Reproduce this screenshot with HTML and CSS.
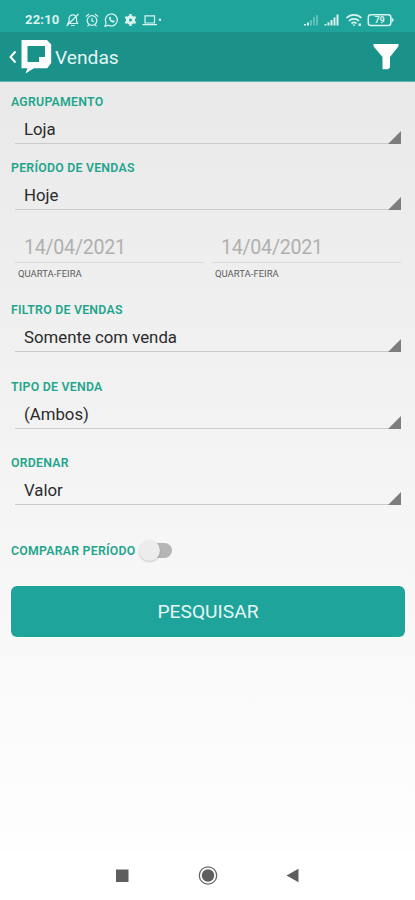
FILE: index.html
```html
<!DOCTYPE html>
<html lang="pt-BR">
<head>
  <meta charset="utf-8">
  <title>Vendas</title>
  <link rel="stylesheet" href="styles.css">
</head>
<body>
  <div class="status-bar">
    <span class="clock">22:10</span>
    <svg class="status-left" width="100" height="16" viewBox="0 0 100 16" fill="none" stroke="currentColor" stroke-width="1.200">
      <!-- muted bell -->
      <path d="M3 11.500h9.500L11.500 9V6.500a3.700 3.700 0 0 0-7.400 0V9zM6 13.500h3.500M1.500 14L13.500 2"/>
      <!-- alarm -->
      <circle cx="27" cy="8.500" r="4.800"/>
      <path d="M27 6v2.800l2 1M21 4.500L24 2M33 4.500L30 2M24 12.700l-1.500 1.700M30 12.700l1.500 1.700"/>
      <!-- whatsapp -->
      <path d="M40 14.300l1-3.700a6 6 0 1 1 2.500 2.600z"/>
      <path d="M44.200 5.200c-.8 2.700 2 5.800 4.900 5.300l.7-1.300-1.800-1.100-.8.700-1.700-1.800.7-.8-.8-1.700z" fill="currentColor" stroke="none"/>
      <!-- settings -->
      <circle cx="65.500" cy="8" r="3.100" stroke-width="3"/>
      <path d="M65.500 2v12M60.300 5l10.400 6M60.300 11l10.400-6" stroke-width="2.400"/>
      <circle cx="65.500" cy="8" r="1.500" fill="#1fa49c" stroke="none"/>
      <!-- laptop -->
      <path d="M80 3.800h9.500v7.200H80zM77.500 12.700h14.500"/>
      <circle cx="95" cy="7.700" r="1.200" fill="currentColor" stroke="none"/>
    </svg>
    <svg class="status-right" width="94" height="16" viewBox="0 0 94 16" fill="currentColor">
      <path d="M1 13.500V12h2v1.500zM4 13.500v-3h2v3z"/>
      <path opacity=".35" d="M7 13.500V8h2v5.500zM10 13.500V5h2v8.500zM13 13.500V3h2v10.500z"/>
      <path d="M21.500 13.500V12h2v1.500zM24.500 13.500v-3.200h2v3.200zM27.500 13.500V8h2v5.500zM30.500 13.500V5.500h2v8zM33.500 13.500V2.500h2v11z"/>
      <g fill="none" stroke="currentColor" stroke-width="1.700">
        <path d="M43.500 6a10.500 10.500 0 0 1 15 0M46 8.900a7 7 0 0 1 10 0M48.500 11.500a3.500 3.500 0 0 1 5 0"/>
      </g>
      <path d="M49.500 12.500h3L51 14.200zM55.500 11.500h2.500V14h-2.500z"/>
      <rect x="65.300" y="2.800" width="22.500" height="10.600" rx="2.500" fill="none" stroke="currentColor" stroke-width="1.500"/>
      <path d="M88.500 5l2.500 3-2.500 3z"/>
      <text x="76.600" y="11.400" text-anchor="middle">79</text>
    </svg>
  </div>

  <div class="app-bar">
    <svg class="back" width="9" height="14" viewBox="0 0 9 14" fill="none" stroke="#fff" stroke-width="2">
      <path d="M7.500 1.500L2.500 7l5 5.500"/>
    </svg>
    <svg class="logo" width="31" height="36" viewBox="0 0 31 36" fill="#fff" fill-rule="evenodd">
      <path d="M.5 1H26l4.200 4.500V24l-4 5.300H13L4.500 34.500l2-5.200H.5zM6.500 7v16H18v-5h6V7z"/>
    </svg>
    <h1>Vendas</h1>
    <svg class="filter" width="26" height="27" viewBox="0 0 26 27" fill="#fff">
      <path d="M.5 1h25v2.200L17 14v10.500L15 26.200H9.500V14L.5 3.200z"/>
    </svg>
  </div>

  <main class="form">
    <div class="field">
      <label>AGRUPAMENTO</label>
      <div class="select">Loja</div>
    </div>
    <div class="field">
      <label>PERÍODO DE VENDAS</label>
      <div class="select">Hoje</div>
    </div>

    <div class="dates">
      <div class="date">
        <div class="date-value">14/04/2021</div>
        <div class="weekday">QUARTA-FEIRA</div>
      </div>
      <div class="date">
        <div class="date-value">14/04/2021</div>
        <div class="weekday">QUARTA-FEIRA</div>
      </div>
    </div>

    <div class="field wide">
      <label>FILTRO DE VENDAS</label>
      <div class="select">Somente com venda</div>
    </div>
    <div class="field wide">
      <label>TIPO DE VENDA</label>
      <div class="select">(Ambos)</div>
    </div>
    <div class="field">
      <label>ORDENAR</label>
      <div class="select">Valor</div>
    </div>

    <div class="compare">
      <label>COMPARAR PERÍODO</label>
      <span class="switch"></span>
    </div>

    <button class="search">PESQUISAR</button>
  </main>

  <div class="nav-bar">
    <svg width="20" height="20" viewBox="0 0 20 20" fill="#5e5e5e">
      <rect x="4" y="3.500" width="12.500" height="12.500"/>
    </svg>
    <svg width="20" height="20" viewBox="0 0 20 20">
      <circle cx="10" cy="9.500" r="8.700" fill="none" stroke="#666" stroke-width="1.300"/>
      <circle cx="10" cy="9.500" r="6.200" fill="#5e5e5e"/>
    </svg>
    <svg width="20" height="20" viewBox="0 0 20 20" fill="#5e5e5e">
      <path d="M3.500 9.500l12-6.800v13.600z"/>
    </svg>
  </div>
</body>
</html>
```
FILE: styles.css
```css
* {
  box-sizing: border-box;
}

body {
  margin: 0;
  height: 900px;
  display: flex;
  flex-direction: column;
  font-family: Roboto, sans-serif;
  color: #2b2b2b;
  background: #fff;
}

.status-bar {
  height: 32px;
  padding: 7px 18px 0 25px;
  display: flex;
  align-items: center;
  color: #d9f3ef;
  background: #1fa49c;
}

.clock {
  width: 35px;
  font-size: 13px;
  font-weight: 700;
  letter-spacing: 0.2px;
}

.status-left {
  margin-left: 5px;
}

.status-right {
  margin-left: auto;
}

.status-right text {
  font-size: 9px;
  font-weight: 700;
}

.app-bar {
  height: 50px;
  padding: 0 16px 0 8px;
  display: flex;
  align-items: center;
  background: #1a9189;
  border-bottom: 1px solid #5fb5ae;
}

.logo {
  margin: 0 0 0 4px;
}

.app-bar h1 {
  margin: 1px 0 0 3px;
  font-size: 19.2px;
  font-weight: 400;
  color: #e3f5f3;
}

.filter {
  margin-left: auto;
}

.form {
  flex: 1;
  padding: 12px 10px 0 11px;
  background: linear-gradient(#e9e9e9, #f6f6f6 60%, #fefefe);
}

.field {
  margin-bottom: 16px;
}

.field.wide {
  margin-bottom: 26.5px;
}

label {
  display: block;
  height: 16px;
  line-height: 16px;
  font-size: 12.3px;
  font-weight: 600;
  letter-spacing: 0.25px;
  color: #1fa58c;
}

.select {
  position: relative;
  height: 34px;
  margin: 0 4px;
  padding-left: 9px;
  line-height: 39px;
  font-size: 16.8px;
  border-bottom: 1px solid #cbcbcb;
}

/* corner marker of the spinner */
.select::after {
  content: "";
  position: absolute;
  right: 0;
  bottom: -1px;
  border-left: 13px solid transparent;
  border-bottom: 13px solid #7d7d7d;
}

.dates {
  display: flex;
  gap: 8px;
  height: 76px;
  padding: 6px 4px 0;
}

.date {
  flex: 1;
}

.date-value {
  height: 31px;
  padding-left: 9px;
  line-height: 31px;
  font-size: 19.6px;
  letter-spacing: -0.25px;
  color: #b0b0b0;
  border-bottom: 1px solid #dadada;
}

.weekday {
  padding-left: 3px;
  margin-top: 5px;
  line-height: 12px;
  font-size: 9.5px;
  color: #5c5c5c;
}

.compare {
  display: flex;
  align-items: center;
  margin-top: 33.5px;
  height: 24px;
}

.switch {
  position: relative;
  width: 28px;
  height: 15px;
  margin-left: 9px;
  border-radius: 8px;
  background: #b5b5b5;
}

.switch::before {
  content: "";
  position: absolute;
  left: -5px;
  top: -3px;
  width: 21px;
  height: 21px;
  border-radius: 50%;
  background: #ececec;
  box-shadow: 0 1px 2px rgba(0,0,0,0.2);
}

.search {
  display: block;
  width: 100%;
  height: 51px;
  margin-top: 23px;
  border: none;
  border-radius: 6px;
  font-family: inherit;
  font-size: 19.2px;
  color: #e6f7f5;
  background: #1fa49c;
}

.nav-bar {
  height: 49px;
  padding: 0 112px;
  display: flex;
  align-items: center;
  justify-content: space-between;
  background: #fff;
}
```
